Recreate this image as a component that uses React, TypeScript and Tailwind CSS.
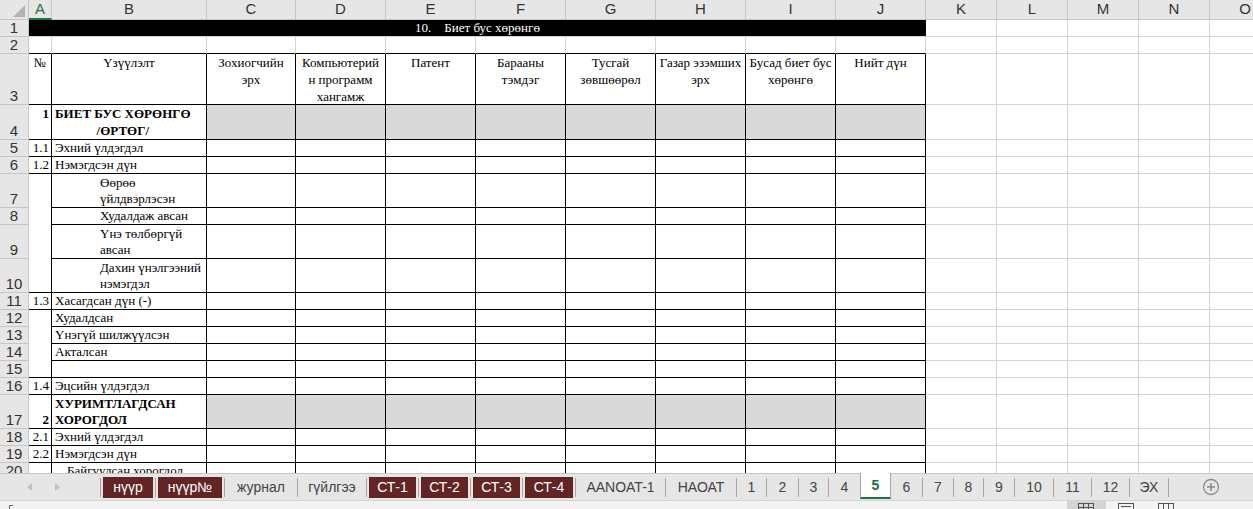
import type { ReactNode } from "react";

const serif = "font-['Liberation_Serif','Times_New_Roman',serif]";
const sans = "font-['Liberation_Sans',Arial,sans-serif]";

// column widths: row header, A..O
const W = [
	"w-[29px]",
	"w-[23px]",
	"w-[155px]",
	"w-[89px]",
	"w-[90px]",
	"w-[90px]",
	"w-[90px]",
	"w-[90px]",
	"w-[90px]",
	"w-[90px]",
	"w-[90px]",
	"w-[71px]",
	"w-[71px]",
	"w-[71px]",
	"w-[71px]",
	"w-[71px]",
];
const LETTERS = ["A", "B", "C", "D", "E", "F", "G", "H", "I", "J", "K", "L", "M", "N", "O"];
const DATA_COLS = [3, 4, 5, 6, 7, 8, 9, 10]; // C..J
const EXTRA_COLS = [11, 12, 13, 14, 15]; // K..O

const HEADERS: ReactNode[] = [
	"Зохиогчийн\nэрх",
	"Компьютерий\nн программ\nхангамж",
	"Патент",
	"Барааны\nтэмдэг",
	"Тусгай\nзөвшөөрөл",
	"Газар эзэмших\nэрх",
	"Бусад биет бус\nхөрөнгө",
	"Нийт дүн",
];

interface Row {
	n: number;
	h: string;
	a?: string;
	aBold?: boolean;
	aTop?: boolean;
	aOpen?: boolean;
	b?: string;
	bClass?: string;
	fill?: boolean;
}

const ROWS: Row[] = [
	{ n: 4, h: "h-[35px]", a: "1", aBold: true, aTop: true, b: "БИЕТ БУС ХӨРӨНГӨ\n/ӨРТӨГ/", bClass: "font-bold text-center items-start leading-[17px]", fill: true },
	{ n: 5, h: "h-[17px]", a: "1.1", b: "Эхний үлдэгдэл" },
	{ n: 6, h: "h-[17px]", a: "1.2", b: "Нэмэгдсэн дүн" },
	{ n: 7, h: "h-[34px]", aOpen: true, b: "Өөрөө\nүйлдвэрлэсэн", bClass: "pl-[48px]" },
	{ n: 8, h: "h-[17px]", aOpen: true, b: "Худалдаж авсан", bClass: "pl-[48px]" },
	{ n: 9, h: "h-[34px]", aOpen: true, b: "Үнэ төлбөргүй\nавсан", bClass: "pl-[48px]" },
	{ n: 10, h: "h-[34px]", b: "Дахин үнэлгээний\nнэмэгдэл", bClass: "pl-[48px]" },
	{ n: 11, h: "h-[17px]", a: "1.3", b: "Хасагдсан дүн (-)" },
	{ n: 12, h: "h-[17px]", aOpen: true, b: "Худалдсан" },
	{ n: 13, h: "h-[17px]", aOpen: true, b: "Үнэгүй шилжүүлсэн" },
	{ n: 14, h: "h-[17px]", aOpen: true, b: "Акталсан" },
	{ n: 15, h: "h-[17px]", b: "" },
	{ n: 16, h: "h-[17px]", a: "1.4", b: "Эцсийн үлдэгдэл" },
	{ n: 17, h: "h-[34px]", a: "2", aBold: true, b: "ХУРИМТЛАГДСАН\nХОРОГДОЛ", bClass: "font-bold", fill: true },
	{ n: 18, h: "h-[17px]", a: "2.1", b: "Эхний үлдэгдэл" },
	{ n: 19, h: "h-[17px]", a: "2.2", b: "Нэмэгдсэн дүн" },
	{ n: 20, h: "h-[17px]", b: "Байгуулсан хорогдол", bClass: "pl-[15px] items-start" },
];

function RowHead({ n }: { n: number }) {
	return (
		<div
			className={`w-[29px] shrink-0 bg-[#e6e6e6] border-r border-b border-[#c6c6c6] flex items-end justify-center text-[15px] leading-[16px] text-[#333] ${sans}`}
		>
			{n}
		</div>
	);
}

function Grid({ i }: { i: number }) {
	return <div className={`${W[i]} shrink-0 border-r border-b border-[#d4d4d4]`} />;
}

function Lines({ text }: { text: string }) {
	return <div className="whitespace-pre-line">{text}</div>;
}

function TableRow({ r }: { r: Row }) {
	return (
		<div className={`flex ${r.h} ${serif} text-[13px] text-black`}>
			<RowHead n={r.n} />
			<div
				className={`w-[23px] shrink-0 border-r border-black flex justify-end pr-[2px] leading-[16px] ${r.aOpen ? "" : "border-b"} ${r.aTop ? "items-start leading-[17px]" : "items-end"} ${r.aBold ? "font-bold" : ""}`}
			>
				{r.a}
			</div>
			<div
				className={`w-[155px] shrink-0 border-r border-b border-black flex items-end pl-[3px] leading-[16px] overflow-hidden ${r.bClass ?? ""}`}
			>
				<Lines text={r.b ?? ""} />
			</div>
			{DATA_COLS.map((i) => (
				<div
					key={i}
					className={`${W[i]} shrink-0 border-r border-b border-black ${r.fill ? "bg-[#d9d9d9]" : ""}`}
				/>
			))}
			{EXTRA_COLS.map((i) => (
				<Grid key={i} i={i} />
			))}
		</div>
	);
}

function Sheet() {
	return (
		<div className="h-[473px] overflow-hidden bg-white">
			{/* column letters */}
			<div className={`flex h-[20px] ${sans} text-[15px] text-[#333]`}>
				<div className="w-[29px] shrink-0 bg-[#e6e6e6] border-r border-b border-[#c6c6c6] relative">
					<svg width="29" height="19" className="absolute left-0 top-0">
						<polygon points="25,5 25,17 13,17" fill="#b4b4b4" />
					</svg>
				</div>
				{LETTERS.map((l, k) => (
					<div
						key={l}
						className={`${W[k + 1]} shrink-0 bg-[#e6e6e6] border-r border-[#c6c6c6] flex items-center justify-center ${k === 0 ? "border-b-2 border-b-[#217346] text-[#217346] bg-[#dedede]" : "border-b"}`}
					>
						{l}
					</div>
				))}
			</div>

			{/* row 1: title */}
			<div className={`flex h-[17px] ${serif} text-[13px]`}>
				<RowHead n={1} />
				<div className="w-[897px] shrink-0 bg-black text-white border-b border-[#d4d4d4] flex items-end justify-center leading-[16px] whitespace-pre">
					{"10.    Биет бус хөрөнгө"}
				</div>
				{EXTRA_COLS.map((i) => (
					<Grid key={i} i={i} />
				))}
			</div>

			{/* row 2 */}
			<div className="flex h-[17px]">
				<RowHead n={2} />
				{[1, 2, ...DATA_COLS].map((i) => (
					<div key={i} className={`${W[i]} shrink-0 border-r border-[#d4d4d4] border-b border-b-black`} />
				))}
				{EXTRA_COLS.map((i) => (
					<Grid key={i} i={i} />
				))}
			</div>

			{/* row 3: table header */}
			<div className={`flex h-[51px] ${serif} text-[13px] leading-[17px] text-black`}>
				<RowHead n={3} />
				<div className="w-[23px] shrink-0 border-r border-b border-black text-center">№</div>
				<div className="w-[155px] shrink-0 border-r border-b border-black text-center">Үзүүлэлт</div>
				{DATA_COLS.map((i, k) => (
					<div
						key={i}
						className={`${W[i]} shrink-0 border-r border-b border-black text-center whitespace-pre-line overflow-hidden`}
					>
						{HEADERS[k]}
					</div>
				))}
				{EXTRA_COLS.map((i) => (
					<Grid key={i} i={i} />
				))}
			</div>

			{ROWS.map((r) => (
				<TableRow key={r.n} r={r} />
			))}
		</div>
	);
}

interface Tab {
	t: string;
	w: string;
	red?: boolean;
	active?: boolean;
}

const TABS: Tab[] = [
	{ t: "нүүр", w: "w-[54px]", red: true },
	{ t: "нүүр№", w: "w-[68px]", red: true },
	{ t: "журнал", w: "w-[72px]" },
	{ t: "гүйлгээ", w: "w-[68px]" },
	{ t: "СТ-1", w: "w-[51px]", red: true },
	{ t: "СТ-2", w: "w-[51px]", red: true },
	{ t: "СТ-3", w: "w-[51px]", red: true },
	{ t: "СТ-4", w: "w-[52px]", red: true },
	{ t: "AANOAT-1", w: "w-[89px]" },
	{ t: "НАОАТ", w: "w-[70px]" },
	{ t: "1", w: "w-[29px]" },
	{ t: "2", w: "w-[31px]" },
	{ t: "3", w: "w-[29px]" },
	{ t: "4", w: "w-[31px]" },
	{ t: "5", w: "w-[31px]", active: true },
	{ t: "6", w: "w-[31px]" },
	{ t: "7", w: "w-[30px]" },
	{ t: "8", w: "w-[29px]" },
	{ t: "9", w: "w-[30px]" },
	{ t: "10", w: "w-[38px]" },
	{ t: "11", w: "w-[37px]" },
	{ t: "12", w: "w-[37px]" },
	{ t: "ЭХ", w: "w-[38px]" },
];

function Sep() {
	return <div className="w-px h-[19px] mt-[4px] shrink-0 bg-[#a6a6a6]" />;
}

function TabBar() {
	return (
		<div className={`flex h-[27px] shrink-0 bg-[#e6e6e6] border-t border-[#c6c6c6] ${sans} text-[14px]`}>
			<div className="w-[100px] shrink-0 flex items-center">
				<svg width="5" height="8" className="ml-[27px]" viewBox="0 0 5 8">
					<polygon points="5,0 5,8 0,4" fill="#c2c2c2" />
				</svg>
				<svg width="5" height="8" className="ml-[23px]" viewBox="0 0 5 8">
					<polygon points="0,0 0,8 5,4" fill="#c2c2c2" />
				</svg>
			</div>
			{TABS.map((tab, k) => {
				const next = TABS[k + 1];
				const sepAfter = !tab.active && !(next && next.active);
				return (
					<div key={tab.t} className="flex shrink-0">
						{k === 0 && <Sep />}
						{tab.active ? (
							<div
								className={`${tab.w} -mt-px h-[26px] bg-white border-x border-[#a6a6a6] border-b-2 border-b-[#217346] flex items-center justify-center font-bold text-[#1d6b40]`}
							>
								{tab.t}
							</div>
						) : (
							<div className={`${tab.w} flex items-start`}>
								<div
									className={`mt-[3px] mx-[2px] h-[21px] flex-1 flex items-center justify-center ${tab.red ? "bg-[#632523] text-white" : "text-[#444]"}`}
								>
									{tab.t}
								</div>
							</div>
						)}
						{sepAfter && <Sep />}
					</div>
				);
			})}
			<div className="ml-[33px] flex items-center">
				<svg width="18" height="18" viewBox="0 0 18 18">
					<circle cx="9" cy="9" r="7.5" fill="none" stroke="#8c8c8c" strokeWidth="1.3" />
					<path d="M9 5v8M5 9h8" stroke="#8c8c8c" strokeWidth="1.6" />
				</svg>
			</div>
		</div>
	);
}

function StatusBar() {
	return (
		<div className="relative h-[9px] shrink-0 bg-[#f3f3f3] border-t border-[#d4d4d4] overflow-hidden">
			<div className="absolute left-[9px] top-[4px] w-[4px] h-[5px] border-l border-t border-[#666]" />
			<div className="absolute left-[1067px] top-0 w-[39px] h-[9px] bg-[#d4d4d4]" />
			<svg width="16" height="8" className="absolute left-[1078px] top-[2px]">
				<rect x="0.5" y="0.5" width="15" height="10" fill="none" stroke="#555" />
				<path d="M5.5 0v8M10.5 0v8M0 4.5h16" stroke="#555" />
			</svg>
			<svg width="16" height="8" className="absolute left-[1118px] top-[2px]">
				<rect x="0.5" y="0.5" width="15" height="10" fill="none" stroke="#555" />
				<path d="M3 3.5h10" stroke="#555" />
			</svg>
			<svg width="16" height="8" className="absolute left-[1158px] top-[2px]">
				<rect x="0.5" y="0.5" width="15" height="10" fill="none" stroke="#555" />
				<path d="M5.5 0v8M10.5 0v8" stroke="#555" />
			</svg>
		</div>
	);
}

export default function App() {
	return (
		<div className="w-[1253px] h-[509px] overflow-hidden flex flex-col bg-white">
			<Sheet />
			<TabBar />
			<StatusBar />
		</div>
	);
}
